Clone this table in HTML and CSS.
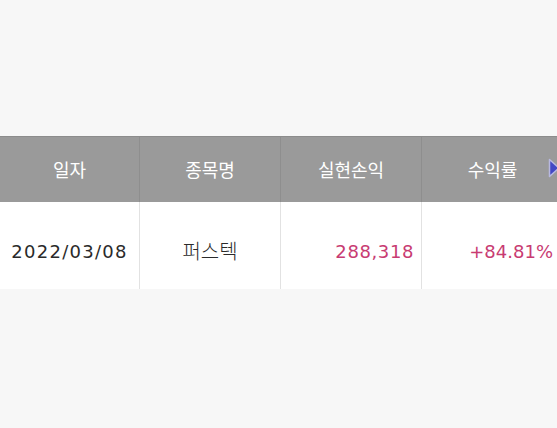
FILE: index.html
```html
<!DOCTYPE html>
<html lang="ko">
<head>
<meta charset="utf-8">
<link rel="stylesheet" href="styles.css">
</head>
<body>
<div class="page">
  <div class="table">
    <div class="row head">
      <div class="cell">일자</div>
      <div class="cell">종목명</div>
      <div class="cell">실현손익</div>
      <div class="cell">수익률</div>
    </div>
    <div class="row body">
      <div class="cell">2022/03/08</div>
      <div class="cell kr">퍼스텍</div>
      <div class="cell num">288,318</div>
      <div class="cell num">+84.81%</div>
    </div>
    <svg class="arrow" width="12" height="20" viewBox="0 0 12 20"><path d="M1.5 1.5 L11 10 L1.5 18.5 Z" fill="#4448c4" stroke="#b8b8e0" stroke-width="1.5" stroke-linejoin="round"/></svg>
  </div>
</div>
</body>
</html>
```

FILE: styles.css
```css
html, body {
  margin: 0;
  padding: 0;
  background: #f7f7f7;
  overflow: hidden;
}
.page {
  width: 557px;
  height: 428px;
  padding-top: 136px;
  box-sizing: border-box;
  font-family: "Noto Sans CJK KR", "Noto Sans", sans-serif;
}
.table {
  position: relative;
  width: 564px;
}
.row {
  display: grid;
  grid-template-columns: 140px 141px 141px 142px;
}
.head {
  height: 66px;
  background: #9a9a9a;
  border-top: 1px solid #8c8c8c;
  box-sizing: border-box;
}
.head .cell {
  color: #ffffff;
  font-size: 18px;
  font-weight: 400;
  display: flex;
  align-items: center;
  justify-content: center;
  border-right: 1px solid #8e8e8e;
  padding-bottom: 2px;
}
.body {
  height: 87px;
  background: #ffffff;
}
.body .cell {
  color: #2a2a2a;
  font-family: "DejaVu Sans", "Noto Sans CJK KR", sans-serif;
  font-size: 18px;
  display: flex;
  align-items: center;
  justify-content: center;
  border-right: 1px solid #e2e2e2;
  letter-spacing: 1.3px;
  padding-top: 12px;
}
.body .kr {
  font-size: 20px;
  font-weight: 300;
  letter-spacing: 0;
  padding-top: 10px;
}
.body .num {
  justify-content: flex-end;
  padding-right: 7px;
  letter-spacing: 0.6px;
  color: #c83b72;
}
.body .cell:last-child {
  padding-right: 10px;
  letter-spacing: 0;
}
.arrow {
  position: absolute;
  left: 548px;
  top: 22px;
}
```
